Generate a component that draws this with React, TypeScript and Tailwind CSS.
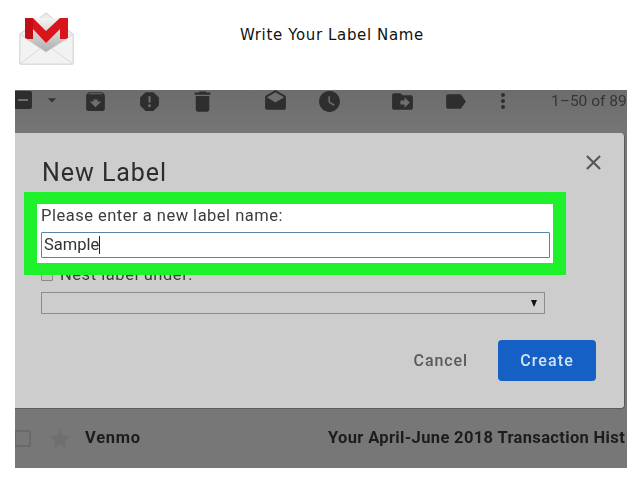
import React from 'react';
import {
  MdArchive,
  MdArrowDropDown,
  MdClose,
  MdDelete,
  MdDrafts,
  MdDriveFileMove,
  MdIndeterminateCheckBox,
  MdLabel,
  MdMoreVert,
  MdReport,
  MdStar,
  MdWatchLater,
} from 'react-icons/md';

function GmailLogo() {
  return (
    <svg width="56" height="54" viewBox="0 0 56 54" className="block">
      <defs>
        <linearGradient id="paper" x1="0" y1="0" x2="0" y2="1">
          <stop offset="0" stopColor="#f4f4f4" />
          <stop offset="1" stopColor="#a9a9a9" />
        </linearGradient>
      </defs>
      <polygon points="1,22 27,1 54,22 54,52 1,52" fill="#ececec" stroke="#c4c4c4" strokeWidth="0.8" />
      <polygon points="6,6 49,6 49,28 27,42 6,28" fill="url(#paper)" />
      <polygon points="6,6 14,6 27,19 41,6 49,6 49,27 41,27 41,17 27,31 14,17 14,27 6,27" fill="#d9141c" />
      <polygon points="6,6 14,6 14,27 6,27" fill="#c20f16" />
      <polygon points="1,22 6,26 27,40 49,26 54,22 54,52 1,52" fill="#f2f2f2" stroke="#cbcbcb" strokeWidth="0.6" />
      <path d="M1.5 51.5 L22 36 M53.5 51.5 L32 36" fill="none" stroke="#d2d2d2" strokeWidth="0.8" />
    </svg>
  );
}

export default function App() {
  return (
    <div className="w-[638px] h-[479px] bg-white overflow-hidden font-['Liberation_Sans',sans-serif]">
      <header className="h-[90px] flex pl-[19px]">
        <div className="pt-[12px]">
          <GmailLogo />
        </div>
        <h1 className="ml-[165px] pt-[26px] text-[15px] leading-[18px] font-normal tracking-[0.63px] text-[#111] font-['DejaVu_Sans',sans-serif]">
          Write Your Label Name
        </h1>
      </header>

      <main className="ml-[15px] w-[612px] h-[378px] bg-[#777777] flex flex-col blur-[0.5px] overflow-hidden">
        <div className="h-[43px] shrink-0 flex items-start text-[#2e2e2e] bg-gradient-to-b from-[#6c6c6c] to-[#767676]">
          <MdIndeterminateCheckBox className="w-[24px] h-[24px] ml-[-4px] mt-[-2px]" />
          <MdArrowDropDown className="w-[20px] h-[20px] ml-[7px] text-[#333]" />
          <MdArchive className="w-[25px] h-[25px] ml-[21px] mt-[-1px]" />
          <MdReport className="w-[25px] h-[25px] ml-[29px] mt-[-1px]" />
          <MdDelete className="w-[27px] h-[27px] ml-[27px] mt-[-2px]" />
          <MdDrafts className="w-[25px] h-[25px] ml-[47px] mt-[-1px]" />
          <MdWatchLater className="w-[25px] h-[25px] ml-[29px] mt-[-1px]" />
          <MdDriveFileMove className="w-[25px] h-[25px] ml-[48px] mt-[-1px]" />
          <MdLabel className="w-[25px] h-[25px] ml-[28px] mt-[-1px]" />
          <MdMoreVert className="w-[24px] h-[24px] ml-[23px] mt-[-1px]" />
          <span className="ml-[36px] mt-[1px] text-[15.5px] leading-[20px] whitespace-nowrap text-[#353535] font-['Roboto',sans-serif]">
            1–50 of 89
          </span>
        </div>

        <section className="relative w-[610px] h-[276px] shrink-0 bg-[#cdcdcd] rounded-br-[4px] rounded-tr-[4px] border-r border-b border-[#5c5c5c] pl-[26px]">
          <div className="h-[59px] pt-[25px] flex justify-between pr-[18px]">
            <h2 className="ml-[1px] text-[25px] leading-[30px] font-normal tracking-[0.95px] text-[#2d2d2d] font-['Roboto',sans-serif]">New Label</h2>
            <MdClose className="w-[25px] h-[25px] mt-[-8px] text-[#565656]" />
          </div>

          <div className="relative z-10 ml-[-17px] w-[542px] h-[83px] border-x-[13px] border-y-[12px] border-[#1ef02c] bg-white pl-[4px] pr-[3px]">
            <p className="pt-[2px] text-[16.5px] leading-[20px] tracking-[0.5px] text-[#3c3c3c] font-['Roboto',sans-serif]">
              Please enter a new label name:
            </p>
            <div className="mt-[6px] h-[26px] flex items-center border border-[#5b83a6] rounded-[1px] bg-white pl-[2px]">
              <span className="text-[16.5px] leading-[20px] text-[#333] font-['Roboto',sans-serif]">Sample</span>
              <span className="w-px h-[18px] bg-[#222]" />
            </div>
          </div>

          <div className="mt-[-15px] h-[29px] flex items-center gap-[7px]">
            <span className="w-[12px] h-[12px] border border-[#8a8a8a] rounded-[1px] bg-[#c4c4c4]" />
            <span className="text-[16.5px] leading-[20px] tracking-[0.55px] text-[#3c3c3c] font-['Roboto',sans-serif]">Nest label under:</span>
          </div>

          <div className="mt-[3px] w-[504px] h-[22px] flex items-center justify-end border border-[#8c8c8c] pr-[7px]">
            <span className="w-0 h-0 border-x-[3.5px] border-x-transparent border-t-[7px] border-t-[#111]" />
          </div>

          <div className="mt-[26px] flex items-center justify-end pr-[28px]">
            <span className="mr-[30px] text-[16px] tracking-[0.9px] font-medium text-[#5a5a5a] font-['Roboto',sans-serif]">Cancel</span>
            <button className="w-[98px] h-[41px] rounded-[4px] bg-[#1560c4] text-[16px] tracking-[1.1px] font-medium text-[#d4e2f5] font-['Roboto',sans-serif]">
              Create
            </button>
          </div>
        </section>

        <div className="flex-1 flex items-center font-bold text-[16.5px] tracking-[0.7px] text-[#1c1c1c] font-['Roboto',sans-serif] whitespace-nowrap">
          <span className="w-[17px] h-[17px] shrink-0 ml-[-1px] border-2 border-[#6a6a6a] rounded-[1px]" />
          <MdStar className="w-[24px] h-[24px] shrink-0 ml-[17px] text-[#6f6f6f]" />
          <span className="ml-[13px] w-[243px] shrink-0">Venmo</span>
          <span className="tracking-[0.35px]">Your April-June 2018 Transaction Hist</span>
        </div>
      </main>
    </div>
  );
}
